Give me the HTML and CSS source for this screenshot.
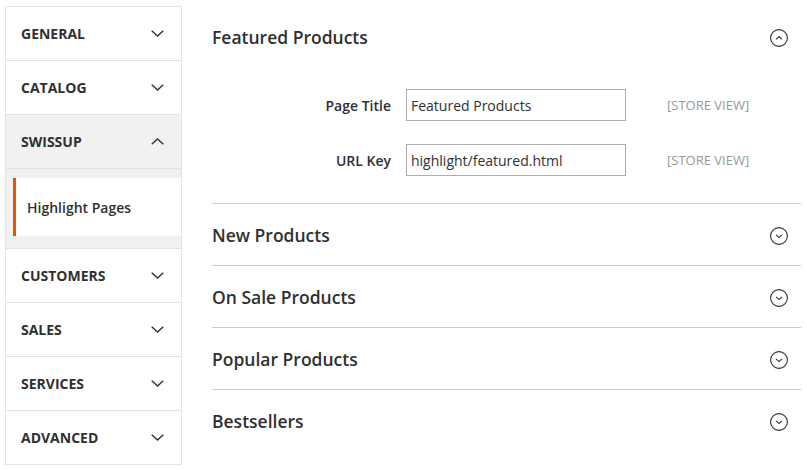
FILE: index.html
```html
<!DOCTYPE html>
<html>
<head>
<meta charset="utf-8">
<link rel="stylesheet" href="styles.css">
</head>
<body>
<div class="page">
  <nav class="nav">
    <div class="nav-title"><span>GENERAL</span><svg class="chev" viewBox="0 0 13 7"><path d="M0.7 0.7 L6.5 6 L12.3 0.7"/></svg></div>
    <div class="nav-title"><span>CATALOG</span><svg class="chev" viewBox="0 0 13 7"><path d="M0.7 0.7 L6.5 6 L12.3 0.7"/></svg></div>
    <div class="nav-title active"><span>SWISSUP</span><svg class="chev" viewBox="0 0 13 7"><path d="M0.7 6.3 L6.5 1 L12.3 6.3"/></svg></div>
    <div class="nav-sub"><div class="nav-item">Highlight Pages</div></div>
    <div class="nav-title"><span>CUSTOMERS</span><svg class="chev" viewBox="0 0 13 7"><path d="M0.7 0.7 L6.5 6 L12.3 0.7"/></svg></div>
    <div class="nav-title"><span>SALES</span><svg class="chev" viewBox="0 0 13 7"><path d="M0.7 0.7 L6.5 6 L12.3 0.7"/></svg></div>
    <div class="nav-title"><span>SERVICES</span><svg class="chev" viewBox="0 0 13 7"><path d="M0.7 0.7 L6.5 6 L12.3 0.7"/></svg></div>
    <div class="nav-title"><span>ADVANCED</span><svg class="chev" viewBox="0 0 13 7"><path d="M0.7 0.7 L6.5 6 L12.3 0.7"/></svg></div>
  </nav>
  <main class="main">
    <section class="section first">
      <div class="sec-head"><span>Featured Products</span><svg class="circ" viewBox="0 0 18 18"><circle cx="9" cy="9" r="8.4"/><path d="M6 10.3 L9 7.5 L12 10.3"/></svg></div>
      <div class="fields">
        <div class="row"><label class="lbl">Page Title</label><div class="input">Featured Products</div><span class="scope">[STORE VIEW]</span></div>
        <div class="row"><label class="lbl">URL Key</label><div class="input">highlight/featured.html</div><span class="scope">[STORE VIEW]</span></div>
      </div>
    </section>
    <section class="section">
      <div class="sec-head"><span>New Products</span><svg class="circ" viewBox="0 0 18 18"><circle cx="9" cy="9" r="8.4"/><path d="M6 7.8 L9 10.6 L12 7.8"/></svg></div>
    </section>
    <section class="section">
      <div class="sec-head"><span>On Sale Products</span><svg class="circ" viewBox="0 0 18 18"><circle cx="9" cy="9" r="8.4"/><path d="M6 7.8 L9 10.6 L12 7.8"/></svg></div>
    </section>
    <section class="section">
      <div class="sec-head"><span>Popular Products</span><svg class="circ" viewBox="0 0 18 18"><circle cx="9" cy="9" r="8.4"/><path d="M6 7.8 L9 10.6 L12 7.8"/></svg></div>
    </section>
    <section class="section">
      <div class="sec-head"><span>Bestsellers</span><svg class="circ" viewBox="0 0 18 18"><circle cx="9" cy="9" r="8.4"/><path d="M6 7.8 L9 10.6 L12 7.8"/></svg></div>
    </section>
  </main>
</div>
</body>
</html>
```
FILE: styles.css
```css
html, body {
  margin: 0;
  padding: 0;
  background: #fff;
}
body {
  font-family: "Open Sans", "Liberation Sans", sans-serif;
  color: #303030;
  width: 807px;
  height: 470px;
  overflow: hidden;
}
.page {
  display: flex;
  align-items: flex-start;
  padding: 6px 0 0 5px;
}
.nav {
  width: 177px;
  box-sizing: border-box;
  border: 1px solid #e3e3e3;
  flex: none;
}
.nav-title {
  height: 53px;
  display: flex;
  align-items: center;
  justify-content: space-between;
  padding: 0 17px 0 15px;
  font-size: 14px;
  font-weight: 700;
  border-top: 1px solid #e3e3e3;
  background: #fff;
}
.nav-title:first-child {
  border-top: none;
}
.nav-title.active {
  background: #f1f1f1;
}
.chev {
  width: 13px;
  height: 7px;
  fill: none;
  stroke: #303030;
  stroke-width: 1.4;
}
.nav-sub {
  background: #f1f1f1;
  border-top: 1px solid #e3e3e3;
  padding: 9px 0 12px 7px;
}
.nav-item {
  height: 58px;
  display: flex;
  align-items: center;
  background: #fff;
  border-left: 3px solid #eb5202;
  padding-left: 11px;
  font-size: 14px;
  font-weight: 600;
}
.main {
  margin-left: 30px;
  width: 589px;
  flex: none;
}
.section {
  border-top: 1px solid #cccccc;
}
.section.first {
  border-top: none;
}
.sec-head {
  height: 61px;
  display: flex;
  align-items: center;
  justify-content: space-between;
  padding-right: 13px;
  font-size: 17.5px;
  font-weight: 600;
}
.circ {
  width: 18px;
  height: 18px;
  margin-top: 3px;
  fill: none;
  stroke: #303030;
  stroke-width: 1.1;
}
.fields {
  padding: 22px 0 27px;
  display: flex;
  flex-direction: column;
  gap: 23px;
}
.row {
  display: grid;
  grid-template-columns: 179px 220px auto;
  column-gap: 15px;
  align-items: center;
}
.lbl {
  text-align: right;
  font-size: 14px;
  font-weight: 600;
}
.input {
  box-sizing: border-box;
  height: 32px;
  border: 1px solid #adadad;
  padding: 0 4px;
  display: flex;
  align-items: center;
  font-size: 14px;
  color: #303030;
}
.scope {
  margin-left: 26px;
  font-size: 13px;
  color: #999;
}
```
